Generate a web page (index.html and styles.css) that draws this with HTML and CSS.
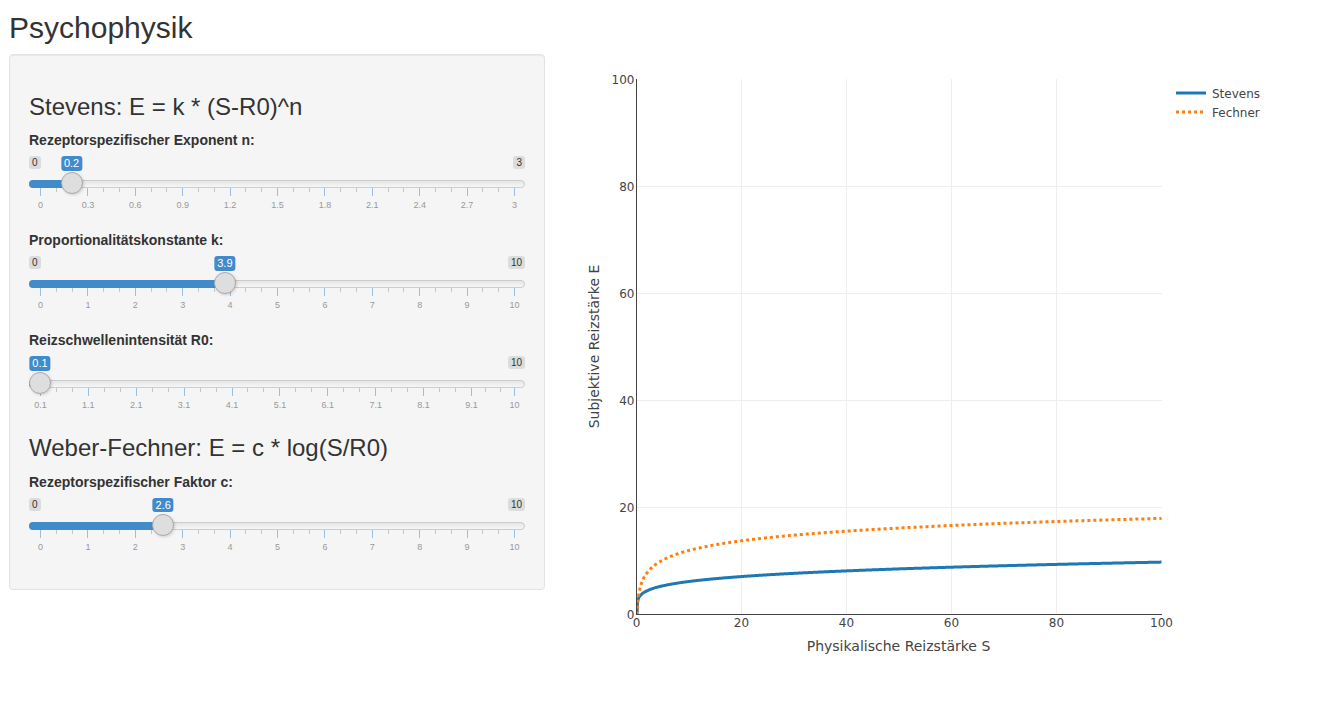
FILE: index.html
```html
<!DOCTYPE html>
<html lang="de">
<head>
<meta charset="utf-8">
<title>Psychophysik</title>
<link rel="stylesheet" href="styles.css">
</head>
<body>
<div class="container">
  <h2 class="title">Psychophysik</h2>
  <div class="row">
    <div class="sidebar">
      <div class="well">
        <h3>Stevens: E = k * (S-R0)^n</h3>
        <div class="form-group">
          <label>Rezeptorspezifischer Exponent n:</label>
          <div class="irs">
            <span class="irs-line"></span>
            <span class="irs-bar" style="width: 42.6px"></span>
            <span class="irs-min">0</span>
            <span class="irs-max">3</span>
            <span class="irs-single" style="left: 42.6px">0.2</span>
            <span class="irs-grid" data-min="0" data-max="3" data-ticks="0,0.3,0.6,0.9,1.2,1.5,1.8,2.1,2.4,2.7,3"></span>
            <span class="irs-slider" style="left: 31.6px"></span>
          </div>
        </div>
        <div class="form-group">
          <label>Proportionalitätskonstante k:</label>
          <div class="irs">
            <span class="irs-line"></span>
            <span class="irs-bar" style="width: 195.9px"></span>
            <span class="irs-min">0</span>
            <span class="irs-max">10</span>
            <span class="irs-single" style="left: 195.9px">3.9</span>
            <span class="irs-grid" data-min="0" data-max="10" data-ticks="0,1,2,3,4,5,6,7,8,9,10"></span>
            <span class="irs-slider" style="left: 184.9px"></span>
          </div>
        </div>
        <div class="form-group">
          <label>Reizschwellenintensität R0:</label>
          <div class="irs">
            <span class="irs-line"></span>
            <span class="irs-bar" style="width: 11px"></span>
            <span class="irs-min hidden">0.1</span>
            <span class="irs-max">10</span>
            <span class="irs-single" style="left: 11px">0.1</span>
            <span class="irs-grid" data-min="0.1" data-max="10" data-ticks="0.1,1.1,2.1,3.1,4.1,5.1,6.1,7.1,8.1,9.1,10"></span>
            <span class="irs-slider" style="left: 0px"></span>
          </div>
        </div>
        <h3>Weber-Fechner: E = c * log(S/R0)</h3>
        <div class="form-group">
          <label>Rezeptorspezifischer Faktor c:</label>
          <div class="irs">
            <span class="irs-line"></span>
            <span class="irs-bar" style="width: 134.2px"></span>
            <span class="irs-min">0</span>
            <span class="irs-max">10</span>
            <span class="irs-single" style="left: 134.2px">2.6</span>
            <span class="irs-grid" data-min="0" data-max="10" data-ticks="0,1,2,3,4,5,6,7,8,9,10"></span>
            <span class="irs-slider" style="left: 123.2px"></span>
          </div>
        </div>
      </div>
    </div>
    <div class="plot-col">
      <svg class="plot" width="740" height="660" viewBox="560 54 740 660" xmlns="http://www.w3.org/2000/svg">
        <defs>
          <clipPath id="plotclip"><rect x="636" y="76" width="528" height="540"/></clipPath>
        </defs>
        <g class="gridlines">
          <line x1="741.5" y1="79" x2="741.5" y2="614"/>
          <line x1="846.5" y1="79" x2="846.5" y2="614"/>
          <line x1="951.5" y1="79" x2="951.5" y2="614"/>
          <line x1="1056.5" y1="79" x2="1056.5" y2="614"/>
          <line x1="637" y1="186.5" x2="1162" y2="186.5"/>
          <line x1="637" y1="293.5" x2="1162" y2="293.5"/>
          <line x1="637" y1="400.5" x2="1162" y2="400.5"/>
          <line x1="637" y1="507.5" x2="1162" y2="507.5"/>
        </g>
        <g clip-path="url(#plotclip)">
          <path id="stevens" class="trace stevens" d=""/>
          <path id="fechner" class="trace fechner" d=""/>
        </g>
        <g class="axislines">
          <line x1="636.5" y1="79" x2="636.5" y2="615"/>
          <line x1="636" y1="614.5" x2="1162" y2="614.5"/>
        </g>
        <g class="ticks ytick">
          <text x="634.5" y="83.5">100</text>
          <text x="634.5" y="190.5">80</text>
          <text x="634.5" y="297.5">60</text>
          <text x="634.5" y="404.5">40</text>
          <text x="634.5" y="511.5">20</text>
          <text x="634.5" y="618.5">0</text>
        </g>
        <g class="ticks xtick">
          <text x="636.5" y="627">0</text>
          <text x="741.5" y="627">20</text>
          <text x="846.5" y="627">40</text>
          <text x="951.5" y="627">60</text>
          <text x="1056.5" y="627">80</text>
          <text x="1161.5" y="627">100</text>
        </g>
        <text class="axis-title" x="898.5" y="651">Physikalische Reizstärke S</text>
        <text class="axis-title" x="0" y="0" transform="translate(598.5 346.5) rotate(-90)">Subjektive Reizstärke E</text>
        <g class="legend">
          <line class="trace stevens" x1="1176" y1="93" x2="1206" y2="93"/>
          <text x="1212" y="97.5">Stevens</text>
          <line class="trace fechner" x1="1176" y1="112" x2="1206" y2="112"/>
          <text x="1212" y="116.5">Fechner</text>
        </g>
      </svg>
    </div>
  </div>
</div>
<script src="script.js"></script>
</body>
</html>
```
FILE: styles.css
```css
* {
  box-sizing: border-box;
}

html, body {
  margin: 0;
  padding: 0;
  background: #fff;
}

body {
  font-family: "Liberation Sans", Arial, Helvetica, sans-serif;
  font-size: 14px;
  line-height: 1.42857;
  color: #333;
  overflow: hidden;
}

.container {
  padding: 0 0 0 9px;
}

.title {
  margin: 11px 0 10px 0;
  font-size: 30px;
  font-weight: 500;
  line-height: 1.1;
}

.row {
  display: flex;
  align-items: flex-start;
}

.sidebar {
  width: 536px;
  flex: none;
}

.well {
  min-height: 20px;
  padding: 19px;
  margin-bottom: 20px;
  background: #f5f5f5;
  border: 1px solid #e3e3e3;
  border-radius: 4px;
  box-shadow: inset 0 1px 1px rgba(0, 0, 0, 0.05);
}

.well h3 {
  margin: 20px 0 10px 0;
  font-size: 24px;
  font-weight: 500;
  line-height: 1.1;
}

.form-group {
  margin-bottom: 15px;
}

.form-group:last-child {
  margin-bottom: 13px;
}

.form-group label {
  display: inline-block;
  margin-bottom: 5px;
  font-weight: bold;
  font-size: 14px;
  line-height: 20px;
}

.irs {
  position: relative;
  display: block;
  height: 60px;
}

.irs-line {
  position: absolute;
  left: 0;
  right: 0;
  top: 25px;
  height: 8px;
  border: 1px solid #ccc;
  border-radius: 16px;
  background: linear-gradient(to bottom, #ddd -50%, #fff 150%);
}

.irs-bar {
  position: absolute;
  left: 0;
  top: 25px;
  height: 8px;
  background: #428bca;
  border-radius: 16px 0 0 16px;
}

.irs-min,
.irs-max {
  position: absolute;
  top: 1px;
  padding: 0 3px;
  font-size: 10px;
  line-height: 13px;
  color: #333;
  background: rgba(0, 0, 0, 0.1);
  border-radius: 3px;
}

.irs-min {
  left: 0;
}

.irs-max {
  right: 0;
}

.hidden {
  visibility: hidden;
}

.irs-single {
  position: absolute;
  top: 1px;
  padding: 0 3px;
  font-size: 11px;
  line-height: 14.5px;
  color: #fff;
  background: #428bca;
  border-radius: 3px;
  transform: translateX(-50%);
  white-space: nowrap;
}

.irs-slider {
  position: absolute;
  top: 17px;
  width: 22px;
  height: 22px;
  border: 1px solid #aaa;
  background: #dedede;
  border-radius: 50%;
  box-shadow: 1px 1px 3px rgba(0, 0, 0, 0.15);
}

.irs-grid {
  position: absolute;
  left: 11px;
  right: 11px;
  bottom: 0;
  height: 27px;
}

.irs-grid-pol {
  position: absolute;
  top: 0;
  width: 1px;
  height: 8px;
  background: #428bca;
  opacity: 0.5;
}

.irs-grid-pol.small {
  height: 4px;
  background: #999;
}

.irs-grid-text {
  position: absolute;
  bottom: 5px;
  font-size: 9px;
  line-height: 9px;
  color: #999;
  white-space: nowrap;
  transform: translateX(-50%);
}

.plot-col {
  flex: none;
  margin-left: 15px;
}

.plot {
  display: block;
}

.gridlines line {
  stroke: #eee;
  stroke-width: 1;
}

.axislines line {
  stroke: #444;
  stroke-width: 1;
}

.plot text {
  font-family: "DejaVu Sans", Verdana, "Open Sans", sans-serif;
  font-size: 12px;
  fill: #444;
}

.ytick text {
  text-anchor: end;
}

.xtick text {
  text-anchor: middle;
}

.plot .axis-title {
  font-size: 14px;
  text-anchor: middle;
}

.trace {
  fill: none;
  stroke-width: 3;
  stroke-linejoin: round;
}

.stevens {
  stroke: #1f77b4;
}

.fechner {
  stroke: #ff7f0e;
  stroke-dasharray: 3 3;
}
```
FILE: script.js
```js
(function () {
  var grids = document.querySelectorAll('.irs-grid');
  grids.forEach(function (grid) {
    var min = parseFloat(grid.getAttribute('data-min'));
    var max = parseFloat(grid.getAttribute('data-max'));
    var ticks = grid.getAttribute('data-ticks').split(',');
    var prev = null;
    ticks.forEach(function (t) {
      var v = parseFloat(t);
      var p = (v - min) / (max - min) * 100;
      if (prev !== null) {
        for (var z = 1; z <= 2; z++) {
          var s = prev + (p - prev) * z / 3;
          var sm = document.createElement('span');
          sm.className = 'irs-grid-pol small';
          sm.style.left = s + '%';
          grid.appendChild(sm);
        }
      }
      var big = document.createElement('span');
      big.className = 'irs-grid-pol';
      big.style.left = p + '%';
      grid.appendChild(big);
      var txt = document.createElement('span');
      txt.className = 'irs-grid-text';
      txt.style.left = 'calc(' + p + '% + 0.5px)';
      txt.textContent = t;
      grid.appendChild(txt);
      prev = p;
    });
  });

  function curve(id, f) {
    var d = '';
    for (var i = 1; i <= 1000; i++) {
      var S = i / 10;
      var E = f(S);
      var x = 636.5 + S * 5.25;
      var y = 614.5 - E * 5.35;
      d += (i === 1 ? 'M' : 'L') + x.toFixed(2) + ',' + y.toFixed(2);
    }
    document.getElementById(id).setAttribute('d', d);
  }

  curve('stevens', function (S) { return 3.9 * Math.pow(Math.max(S - 0.1, 0), 0.2); });
  curve('fechner', function (S) { return 2.6 * Math.log(S / 0.1); });
})();
```
